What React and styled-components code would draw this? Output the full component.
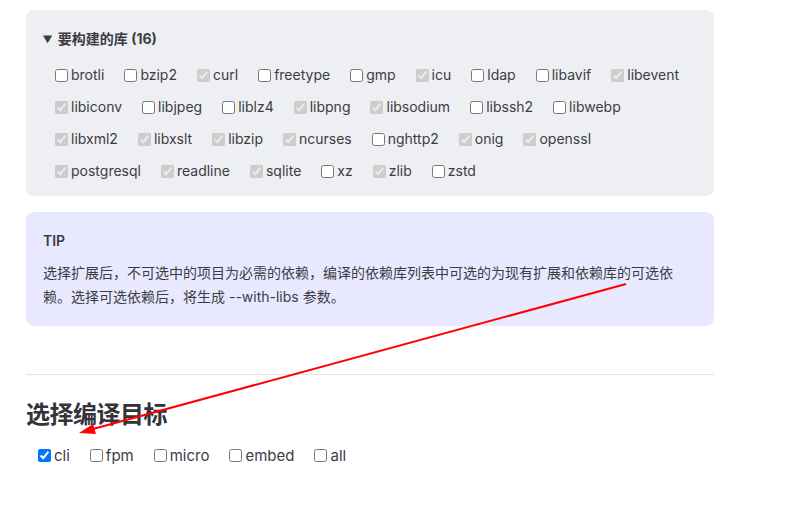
import styled, { createGlobalStyle } from "styled-components";

const GlobalStyle = createGlobalStyle`
  html, body {
    margin: 0;
    padding: 0;
    background: #ffffff;
  }
  body {
    font-family: Inter, "Noto Sans CJK SC", sans-serif;
    font-size: 14px;
    color: #3c3c43;
    -webkit-font-smoothing: antialiased;
  }
`;

const Page = styled.div`
  position: relative;
  width: 806px;
  height: 506px;
  overflow: hidden;
  box-sizing: border-box;
  padding: 10px 0 0 26px;
`;

const Doc = styled.div`
  width: 688px;
`;

const Details = styled.details`
  border: 1px solid transparent;
  border-radius: 8px;
  padding: 16px 16px 8px;
  background-color: #eeeff2;
  line-height: 24px;
  font-size: 14px;
`;

const Summary = styled.summary`
  margin: 0 0 8px;
  font-weight: 700;
  cursor: pointer;
  color: #3c3c43;
`;

const CheckGroup = styled.div`
  display: flex;
  flex-wrap: wrap;
`;

const Option = styled.label`
  display: inline-flex;
  align-items: center;
  height: ${({ $h }) => $h || 32}px;
  margin: 0 8px;
  color: #3c3c43;
  font-size: ${({ $size }) => $size || 14}px;
  input {
    margin: 0 3px 0 4px;
    width: 13px;
    height: 13px;
  }
`;

const Tip = styled.div`
  margin-top: 16px;
  border: 1px solid transparent;
  border-radius: 8px;
  padding: 16px 16px 8px;
  background-color: #e8e9ff;
  line-height: 24px;
  font-size: 14px;
`;

const TipTitle = styled.p`
  margin: 0;
  font-weight: 600;
`;

const TipText = styled.p`
  margin: 8px 0;
`;

const H2 = styled.h2`
  margin: 48px 0 16px;
  border-top: 1px solid #e2e2e3;
  padding-top: 24px;
  font-size: 24px;
  line-height: 32px;
  font-weight: 600;
  color: #333338;
  letter-spacing: -0.02em;
`;

const Arrow = styled.svg`
  position: absolute;
  left: 0;
  top: 0;
  pointer-events: none;
`;

const libs = [
  ["brotli", 0],
  ["bzip2", 0],
  ["curl", 1],
  ["freetype", 0],
  ["gmp", 0],
  ["icu", 1],
  ["ldap", 0],
  ["libavif", 0],
  ["libevent", 1],
  ["libiconv", 1],
  ["libjpeg", 0],
  ["liblz4", 0],
  ["libpng", 1],
  ["libsodium", 1],
  ["libssh2", 0],
  ["libwebp", 0],
  ["libxml2", 1],
  ["libxslt", 1],
  ["libzip", 1],
  ["ncurses", 1],
  ["nghttp2", 0],
  ["onig", 1],
  ["openssl", 1],
  ["postgresql", 1],
  ["readline", 1],
  ["sqlite", 1],
  ["xz", 0],
  ["zlib", 1],
  ["zstd", 0],
];

const targets = ["cli", "fpm", "micro", "embed", "all"];

export default function App() {
  return (
    <Page>
      <GlobalStyle />
      <Doc>
        <Details open>
          <Summary>要构建的库 (16)</Summary>
          <CheckGroup>
            {libs.map(([name, required]) => (
              <Option key={name}>
                {required ? (
                  <input type="checkbox" checked disabled readOnly />
                ) : (
                  <input type="checkbox" />
                )}
                {name}
              </Option>
            ))}
          </CheckGroup>
        </Details>

        <Tip>
          <TipTitle>TIP</TipTitle>
          <TipText>
            选择扩展后，不可选中的项目为必需的依赖，编译的依赖库列表中可选的为现有扩展和依赖库的可选依赖。选择可选依赖后，将生成 --with-libs 参数。
          </TipText>
        </Tip>

        <H2>选择编译目标</H2>
        <CheckGroup>
          {targets.map((t) => (
            <Option key={t} $h={16} $size={15}>
              <input type="checkbox" defaultChecked={t === "cli"} />
              {t}
            </Option>
          ))}
        </CheckGroup>
      </Doc>

      <Arrow width="806" height="506" viewBox="0 0 806 506">
        <line x1="626" y1="284" x2="93" y2="429" stroke="#ff0000" strokeWidth="2" />
        <polygon points="79,433 96,434 93,424" fill="#ff0000" />
      </Arrow>
    </Page>
  );
}
